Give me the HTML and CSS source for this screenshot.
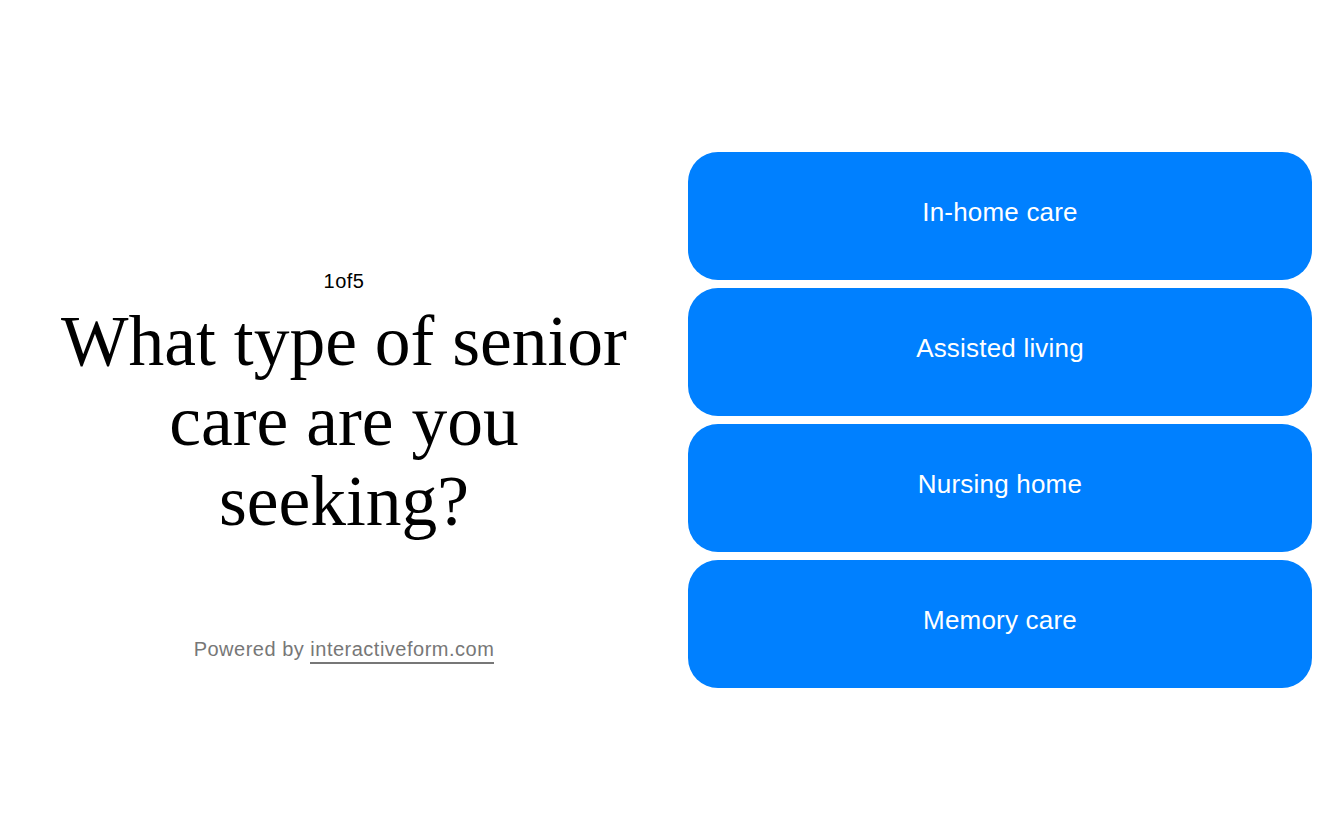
FILE: index.html
```html
<!DOCTYPE html>
<html lang="en">
<head>
    <meta charset="UTF-8">
    <meta name="viewport" content="width=device-width, initial-scale=1.0">
    <title>What type of senior care are you seeking?</title>
    <link rel="stylesheet" href="styles.css">
</head>
<body>
    <main class="form-step">
        <section class="question">
            <div class="step-count">1of5</div>
            <h1>What type of senior care are you seeking?</h1>
            <p class="powered">Powered by <a href="#">interactiveform.com</a></p>
        </section>
        <section class="answers">
            <button class="answer">In-home care</button>
            <button class="answer">Assisted living</button>
            <button class="answer">Nursing home</button>
            <button class="answer">Memory care</button>
        </section>
    </main>
</body>
</html>
```

FILE: styles.css
```css
body {
    margin: 0;
    padding: 0;
    background-color: #fff;
    font-family: 'Liberation Sans', Arial, sans-serif;
    color: #000;
}

.form-step {
    display: flex;
    align-items: center;
    height: 100vh;
    padding-right: 32px;
}

.question {
    width: 688px;
    flex: 0 0 auto;
    display: flex;
    flex-direction: column;
    align-items: center;
    text-align: center;
    padding-top: 90px;
    box-sizing: border-box;
}

.step-count {
    font-size: 20px;
    line-height: 24px;
    letter-spacing: 0.5px;
}

.question h1 {
    font-family: 'Liberation Serif', 'Times New Roman', serif;
    font-weight: normal;
    font-size: 71.5px;
    line-height: 80px;
    margin: 8px 0 0;
    width: 600px;
}

.powered {
    margin: 96px 0 0;
    font-size: 20px;
    line-height: 24px;
    color: #777;
    letter-spacing: 0.5px;
}

.powered a {
    color: #777;
    text-decoration: none;
    border-bottom: 2px solid #777;
    padding-bottom: 2px;
}

.answers {
    flex: 1;
    display: flex;
    flex-direction: column;
    gap: 8px;
}

.answer {
    height: 128px;
    border: none;
    border-radius: 30px;
    background-color: #0080ff;
    color: #fff;
    font-family: 'Liberation Sans', Arial, sans-serif;
    font-size: 26px;
    letter-spacing: 0.2px;
    padding: 0 0 8px;
    cursor: pointer;
}

.answer:hover {
    background-color: #0070e0;
}
```
